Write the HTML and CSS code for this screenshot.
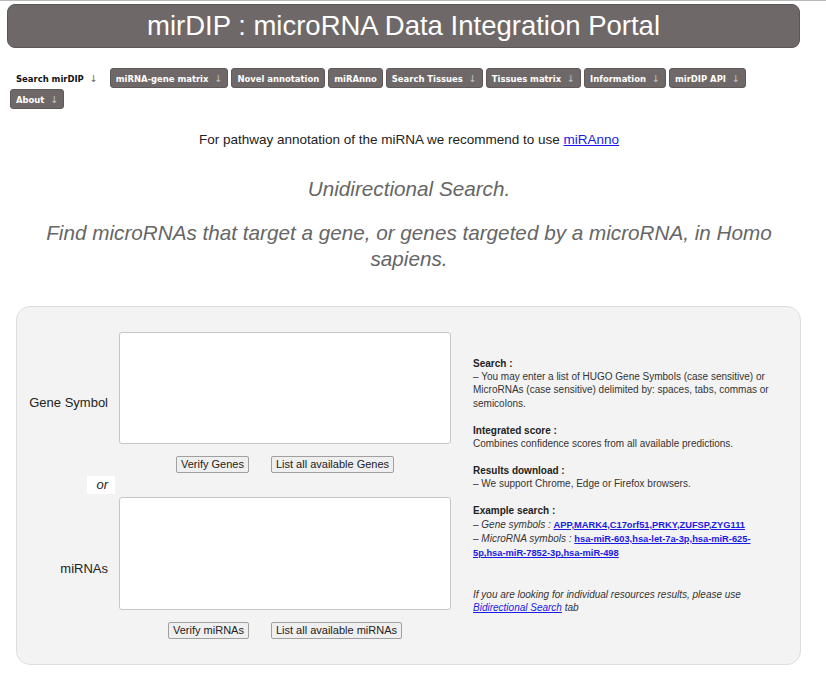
FILE: index.html
```html
<!DOCTYPE html>
<html lang="en">
<head>
<meta charset="utf-8">
<title>mirDIP : microRNA Data Integration Portal</title>
<link rel="stylesheet" href="styles.css">
</head>
<body>
<header class="banner"><h1>mirDIP : microRNA Data Integration Portal</h1></header>
<nav class="tabs">
  <a class="tab active" href="#">Search mirDIP<span class="arrow">↓</span></a>
  <a class="tab" href="#">miRNA-gene matrix<span class="arrow">↓</span></a>
  <a class="tab" href="#">Novel annotation</a>
  <a class="tab" href="#">miRAnno</a>
  <a class="tab" href="#">Search Tissues<span class="arrow">↓</span></a>
  <a class="tab" href="#">Tissues matrix<span class="arrow">↓</span></a>
  <a class="tab" href="#">Information<span class="arrow">↓</span></a>
  <a class="tab" href="#">mirDIP API<span class="arrow">↓</span></a>
  <a class="tab" href="#">About<span class="arrow">↓</span></a>
</nav>
<main class="main">
  <p class="recommend">For pathway annotation of the miRNA we recommend to use <a href="#">miRAnno</a></p>
  <h2 class="subtitle">Unidirectional Search.</h2>
  <h2 class="subtitle find">Find microRNAs that target a gene, or genes targeted by a microRNA, in Homo sapiens.</h2>
  <section class="panel">
    <div class="form">
      <label class="label gene-label" for="genes">Gene Symbol</label>
      <textarea id="genes" class="box"></textarea>
      <div class="buttons row2"><button>Verify Genes</button><button>List all available Genes</button></div>
      <span class="or">or</span>
      <label class="label mir-label" for="mirnas">miRNAs</label>
      <textarea id="mirnas" class="box box2"></textarea>
      <div class="buttons row5"><button>Verify miRNAs</button><button>List all available miRNAs</button></div>
    </div>
    <div class="help">
      <b>Search :</b><br>
      – You may enter a list of HUGO Gene Symbols (case sensitive) or MicroRNAs (case sensitive) delimited by: spaces, tabs, commas or semicolons.<br><br>
      <b>Integrated score :</b><br>
      Combines confidence scores from all available predictions.<br><br>
      <b>Results download :</b><br>
      – We support Chrome, Edge or Firefox browsers.<br><br>
      <b>Example search :</b><br>
      – <i>Gene symbols :</i> <a class="ex" href="#">APP,MARK4,C17orf51,PRKY,ZUFSP,ZYG111</a><br>
      – <i>MicroRNA symbols :</i> <a class="ex" href="#">hsa-miR-603,hsa-let-7a-3p,hsa-miR-625-5p,hsa-miR-7852-3p,hsa-miR-498</a><br><br><br>
      <i>If you are looking for individual resources results, please use <a href="#">Bidirectional Search</a> tab</i>
    </div>
  </section>
</main>
</body>
</html>
```
FILE: styles.css
```css
html, body {
  margin: 0;
  padding: 0;
  background: #fff;
}
body {
  border-top: 1px solid #b8b8b8;
  font-family: "Liberation Sans", Arial, sans-serif;
  color: #222;
}
.banner {
  margin: 3px 26px 0 7px;
  height: 44px;
  box-sizing: border-box;
  background: #6e6968;
  border: 1px solid #5a5655;
  border-radius: 8px;
  display: flex;
  align-items: center;
  justify-content: center;
}
.banner h1 {
  margin: 0;
  font: normal 27.5px/1 "Liberation Sans", Arial, sans-serif;
  color: #fff;
}
.tabs {
  display: flex;
  flex-wrap: wrap;
  gap: 1px 3px;
  margin: 20px 0 0 10px;
  width: 780px;
}
.tab {
  height: 20px;
  box-sizing: border-box;
  padding: 0 5px;
  display: flex;
  align-items: center;
  background: #6e6968;
  border: 1px solid #5f5a59;
  border-radius: 3px;
  color: #fff;
  font: bold 9.4px "DejaVu Sans Condensed", "DejaVu Sans", sans-serif;
  font-stretch: condensed;
  text-decoration: none;
  white-space: nowrap;
}
.tab.active {
  background: transparent;
  border-color: transparent;
  color: #111;
  padding-right: 8px;
}
.arrow {
  margin: 0 0 0 6px;
  font: normal 9.5px "DejaVu Sans", sans-serif;
  color: #c4c4c4;
}
.tab.active .arrow {
  color: #666;
}
.main {
  width: 802px;
  margin-left: 8px;
}
.recommend {
  margin: 23px 0 0;
  text-align: center;
  font-size: 13.5px;
  line-height: 15px;
  color: #222;
}
.recommend a {
  color: #1a1ae6;
}
.subtitle {
  margin: 29px 0 0;
  text-align: center;
  font: italic 20.7px/26px "Liberation Sans", Arial, sans-serif;
  color: #666;
}
.subtitle.find {
  margin-top: 18px;
  padding: 0 15px;
}
.panel {
  margin: 34px 9px 0 8px;
  display: flex;
  align-items: center;
  background: #f3f3f3;
  border: 1px solid #dedede;
  border-radius: 14px;
  padding: 25px 0;
}
.form {
  display: grid;
  grid-template-columns: 91px 332px;
  grid-template-rows: 112px auto auto 113px auto;
  column-gap: 11px;
}
.label {
  grid-column: 1;
  justify-self: end;
  align-self: center;
  font-size: 13px;
  color: #222;
}
.gene-label { grid-row: 1 / 3; }
.mir-label { grid-row: 4 / 6; }
.box {
  grid-column: 2;
  grid-row: 1;
  width: 332px;
  height: 112px;
  box-sizing: border-box;
  margin: 0;
  border: 1px solid #c6c6c6;
  border-radius: 3px;
  background: #fff;
  resize: none;
}
.box2 {
  grid-row: 4;
  height: 113px;
}
.buttons {
  grid-column: 2;
  display: flex;
  justify-content: center;
  gap: 22px;
  margin-top: 12px;
}
.row2 { grid-row: 2; }
.row5 { grid-row: 5; }
.buttons button {
  height: 17px;
  box-sizing: border-box;
  padding: 0 4px;
  margin: 0;
  border: 1px solid #a0a0a0;
  border-radius: 2px;
  background: #efefef;
  color: #222;
  font: 11px/15px "Liberation Sans", Arial, sans-serif;
}
.or {
  grid-column: 1;
  grid-row: 3;
  justify-self: end;
  margin: 3px -7px 3px 0;
  padding: 0 7px 0 9px;
  background: #fff;
  font: italic 13px/18px "Liberation Sans", Arial, sans-serif;
  color: #222;
}
.help {
  margin-left: 22px;
  width: 305px;
  font: 10px/13.4px "Liberation Sans", Arial, sans-serif;
  color: #333;
}
.help b {
  color: #222;
}
.help a {
  color: #1a1ae6;
}
.help a.ex {
  font-weight: bold;
  font-size: 9.3px;
}
```
